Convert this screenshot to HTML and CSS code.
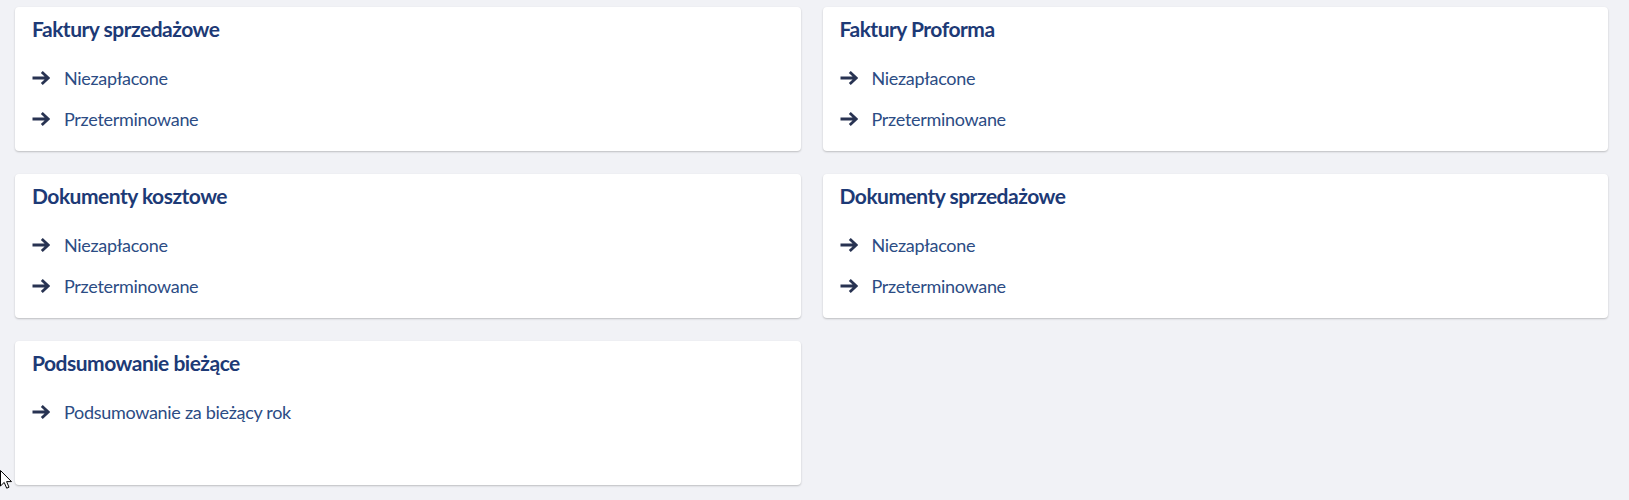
FILE: index.html
```html
<!DOCTYPE html>
<html lang="pl">
<head>
<meta charset="utf-8">
<title>Dashboard</title>
<link rel="stylesheet" href="styles.css">
</head>
<body>
<div class="grid">
  <section class="card">
    <h2 class="card-title">Faktury sprzedażowe</h2>
    <ul class="links">
      <li><a href="#"><svg class="arrow" viewBox="0 0 18 14"><path d="M0.5 7H16.2M9.8 1L16.2 7L9.8 13"/></svg><span>Niezapłacone</span></a></li>
      <li><a href="#"><svg class="arrow" viewBox="0 0 18 14"><path d="M0.5 7H16.2M9.8 1L16.2 7L9.8 13"/></svg><span>Przeterminowane</span></a></li>
    </ul>
  </section>
  <section class="card">
    <h2 class="card-title">Faktury Proforma</h2>
    <ul class="links">
      <li><a href="#"><svg class="arrow" viewBox="0 0 18 14"><path d="M0.5 7H16.2M9.8 1L16.2 7L9.8 13"/></svg><span>Niezapłacone</span></a></li>
      <li><a href="#"><svg class="arrow" viewBox="0 0 18 14"><path d="M0.5 7H16.2M9.8 1L16.2 7L9.8 13"/></svg><span>Przeterminowane</span></a></li>
    </ul>
  </section>
  <section class="card">
    <h2 class="card-title">Dokumenty kosztowe</h2>
    <ul class="links">
      <li><a href="#"><svg class="arrow" viewBox="0 0 18 14"><path d="M0.5 7H16.2M9.8 1L16.2 7L9.8 13"/></svg><span>Niezapłacone</span></a></li>
      <li><a href="#"><svg class="arrow" viewBox="0 0 18 14"><path d="M0.5 7H16.2M9.8 1L16.2 7L9.8 13"/></svg><span>Przeterminowane</span></a></li>
    </ul>
  </section>
  <section class="card">
    <h2 class="card-title">Dokumenty sprzedażowe</h2>
    <ul class="links">
      <li><a href="#"><svg class="arrow" viewBox="0 0 18 14"><path d="M0.5 7H16.2M9.8 1L16.2 7L9.8 13"/></svg><span>Niezapłacone</span></a></li>
      <li><a href="#"><svg class="arrow" viewBox="0 0 18 14"><path d="M0.5 7H16.2M9.8 1L16.2 7L9.8 13"/></svg><span>Przeterminowane</span></a></li>
    </ul>
  </section>
  <section class="card">
    <h2 class="card-title">Podsumowanie bieżące</h2>
    <ul class="links">
      <li><a href="#"><svg class="arrow" viewBox="0 0 18 14"><path d="M0.5 7H16.2M9.8 1L16.2 7L9.8 13"/></svg><span>Podsumowanie za bieżący rok</span></a></li>
    </ul>
  </section>
</div>
<svg class="cursor" viewBox="0 0 12 19"><path d="M0.5 0.5V16L4.2 12.4L6.7 18.2L9 17.2L6.6 11.6H11.5Z"/></svg>
</body>
</html>
```
FILE: styles.css
```css
html, body {
  margin: 0;
  padding: 0;
  background: #f1f2f6;
  font-family: Lato, "Open Sans", sans-serif;
}
body {
  position: relative;
  height: 500px;
  overflow: hidden;
}
.grid {
  display: grid;
  grid-template-columns: 1fr 1fr;
  column-gap: 22px;
  row-gap: 23px;
  padding: 7px 21px 0 15px;
}
.card {
  background: #fff;
  border-radius: 4px;
  box-shadow: 0 1px 2px rgba(0, 0, 0, 0.22);
  height: 144px;
  box-sizing: border-box;
  padding: 9px 17px;
}
.card-title {
  margin: 0;
  font-size: 21px;
  line-height: 26px;
  font-weight: 700;
  letter-spacing: -0.5px;
  color: #1d3a76;
}
.links {
  list-style: none;
  margin: 25px 0 0;
  padding: 0;
  display: flex;
  flex-direction: column;
  gap: 19px;
}
.links a {
  display: flex;
  align-items: center;
  gap: 14px;
  text-decoration: none;
  color: #2c4c84;
  font-size: 18px;
  line-height: 22px;
  letter-spacing: -0.3px;
}
.arrow {
  width: 18px;
  height: 14px;
  fill: none;
  stroke: #283352;
  stroke-width: 2.8;
  stroke-linecap: butt;
  stroke-linejoin: miter;
  flex: none;
}
.cursor {
  position: absolute;
  left: 0;
  top: 470px;
  width: 12px;
  height: 19px;
  fill: #fff;
  stroke: #000;
  stroke-width: 1;
}
```
